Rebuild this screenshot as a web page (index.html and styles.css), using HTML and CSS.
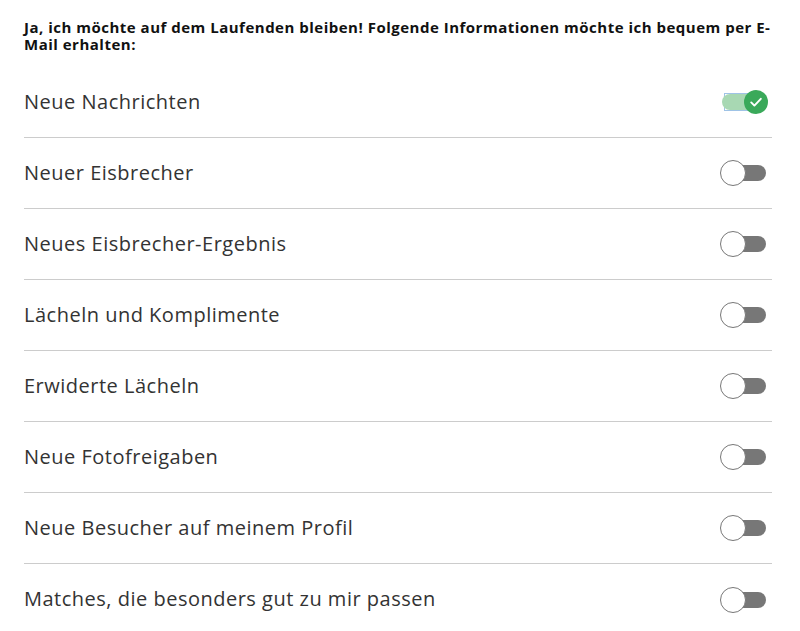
FILE: index.html
```html
<!DOCTYPE html>
<html lang="de">
<head>
    <meta charset="UTF-8">
    <meta name="viewport" content="width=device-width, initial-scale=1.0">
    <title>E-Mail Benachrichtigungen</title>
    <link rel="stylesheet" href="styles.css">
</head>
<body>

    <div class="settings">
        <p class="intro">Ja, ich möchte auf dem Laufenden bleiben! Folgende Informationen möchte ich bequem per E-Mail erhalten:</p>

        <ul class="options">
            <li class="option">
                <span>Neue Nachrichten</span>
                <label class="toggle on"><input type="checkbox" checked><span class="track"></span><span class="knob">
                    <svg viewBox="0 0 20 20" width="16" height="16"><path d="M4 10.5l4 4 8-8.5" fill="none" stroke="#fff" stroke-width="2.4" stroke-linecap="round" stroke-linejoin="round"/></svg>
                </span></label>
            </li>
            <li class="option">
                <span>Neuer Eisbrecher</span>
                <label class="toggle"><input type="checkbox"><span class="track"></span><span class="knob"></span></label>
            </li>
            <li class="option">
                <span>Neues Eisbrecher-Ergebnis</span>
                <label class="toggle"><input type="checkbox"><span class="track"></span><span class="knob"></span></label>
            </li>
            <li class="option">
                <span>Lächeln und Komplimente</span>
                <label class="toggle"><input type="checkbox"><span class="track"></span><span class="knob"></span></label>
            </li>
            <li class="option">
                <span>Erwiderte Lächeln</span>
                <label class="toggle"><input type="checkbox"><span class="track"></span><span class="knob"></span></label>
            </li>
            <li class="option">
                <span>Neue Fotofreigaben</span>
                <label class="toggle"><input type="checkbox"><span class="track"></span><span class="knob"></span></label>
            </li>
            <li class="option">
                <span>Neue Besucher auf meinem Profil</span>
                <label class="toggle"><input type="checkbox"><span class="track"></span><span class="knob"></span></label>
            </li>
            <li class="option">
                <span>Matches, die besonders gut zu mir passen</span>
                <label class="toggle"><input type="checkbox"><span class="track"></span><span class="knob"></span></label>
            </li>
        </ul>
    </div>

</body>
</html>
```

FILE: styles.css
```css
body {
    margin: 0;
    font-family: "Open Sans", "DejaVu Sans", sans-serif;
    color: #333;
    background: #fff;
}
.settings {
    padding: 19px 24px 0 24px;
}
.intro {
    margin: 0;
    font-size: 15px;
    font-weight: bold;
    letter-spacing: 0.5px;
    line-height: 17px;
    color: #111;
}
.options {
    list-style: none;
    margin: 14px 0 0 0;
    padding: 0;
    width: 748px;
}
.option {
    display: flex;
    align-items: center;
    justify-content: space-between;
    box-sizing: border-box;
    height: 71px;
    padding-bottom: 2px;
    border-bottom: 1px solid #ccc;
    font-size: 20px;
    letter-spacing: 0.5px;
}
.option:last-child {
    border-bottom: none;
}
.toggle {
    position: relative;
    display: block;
    width: 46px;
    height: 26px;
    margin-right: 6px;
    margin-top: 2px;
    cursor: pointer;
}
.toggle input {
    display: none;
}
.track {
    position: absolute;
    left: 14px;
    right: 0;
    top: 5px;
    height: 16px;
    border-radius: 0 8px 8px 0;
    background: #777;
}
.knob {
    position: absolute;
    left: 0;
    top: 0;
    width: 24px;
    height: 24px;
    border-radius: 50%;
    border: 1px solid #777;
    background: #fff;
    display: flex;
    align-items: center;
    justify-content: center;
}
.toggle.on {
    outline: 1px solid #9fc3e6;
    outline-offset: -5px;
}
.toggle.on .track {
    left: 2px;
    right: 8px;
    border-radius: 8px 0 0 8px;
    background: #a8d8b3;
}
.toggle.on .knob {
    left: auto;
    right: -2px;
    top: 1px;
    border: none;
    background: #3aa95a;
}
```
